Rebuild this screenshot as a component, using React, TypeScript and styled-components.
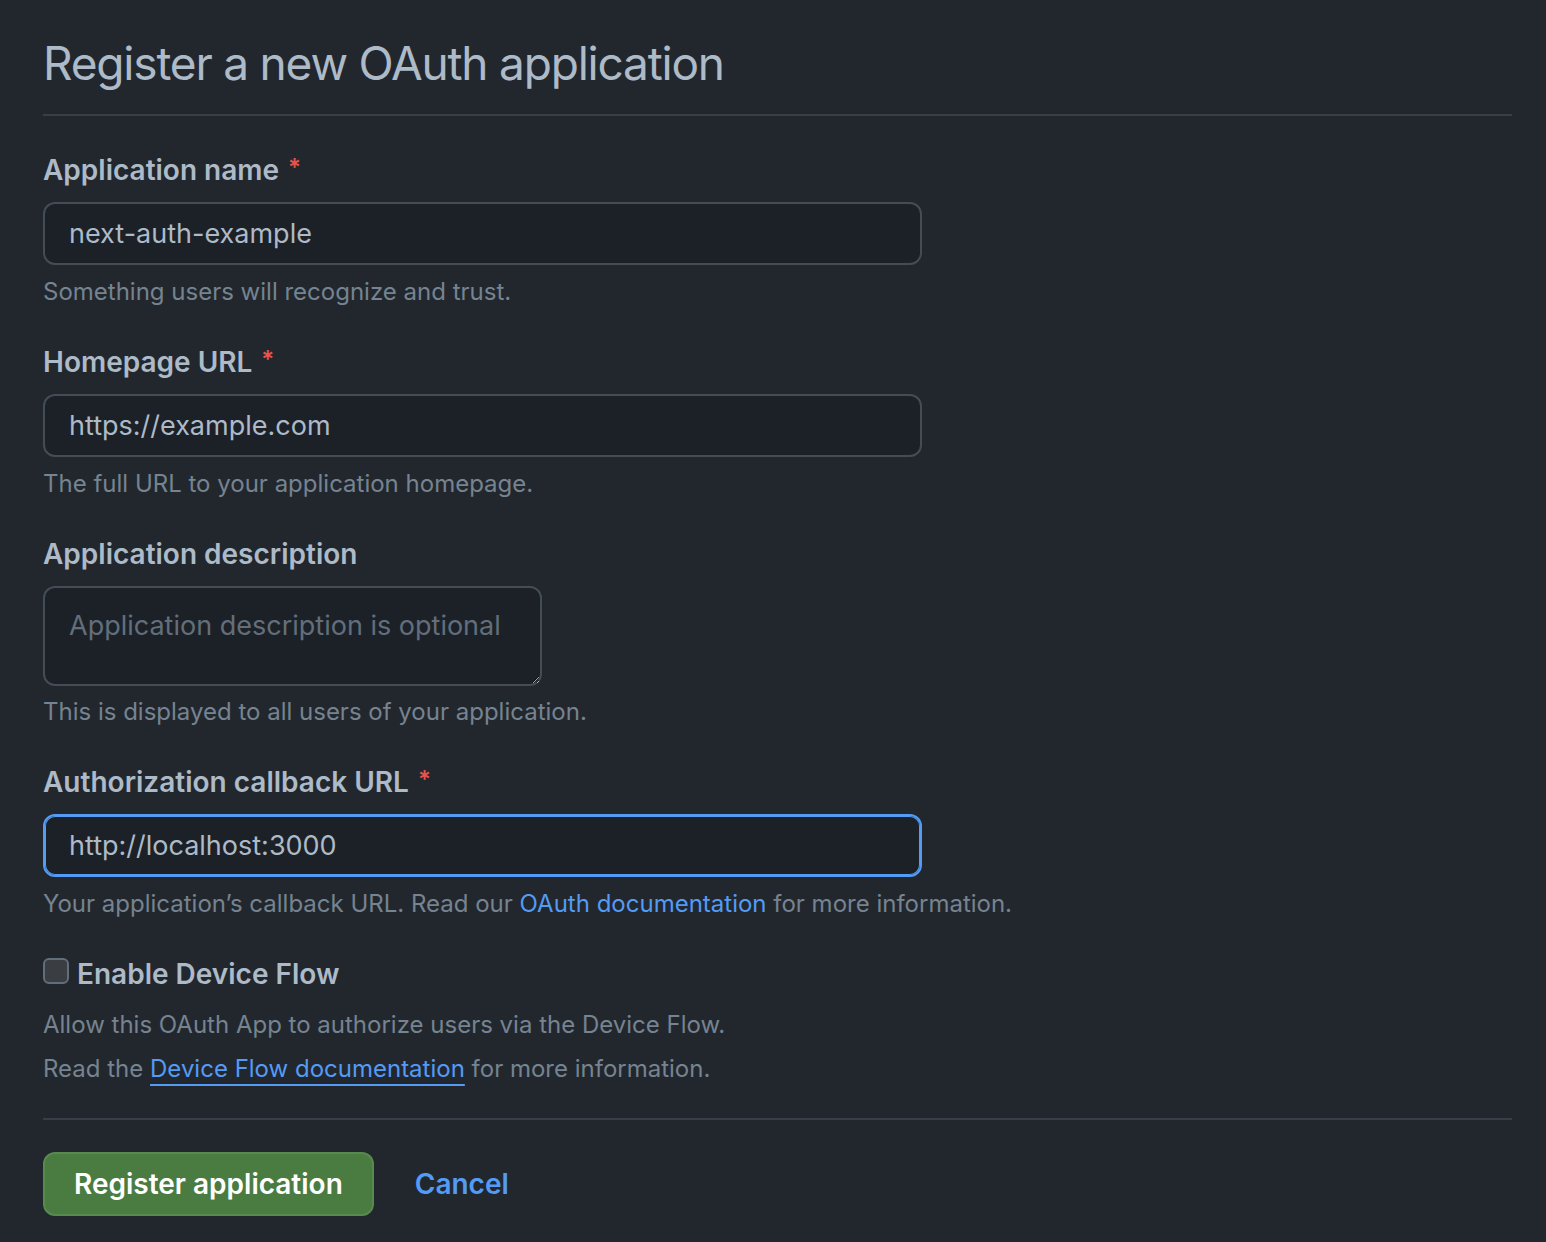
import React, { ReactElement } from 'react';
import styled, { createGlobalStyle } from 'styled-components';

const GlobalStyle = createGlobalStyle`
  html, body {
    margin: 0;
    padding: 0;
    background: #22272e;
  }
  body {
    font-family: Inter, "Noto Sans", "Liberation Sans", sans-serif;
    color: #adbac7;
  }
`;

const Page = styled.main`
  padding: 27px 34px 0 43px;
  min-height: 1242px;
  box-sizing: border-box;
`;

const Header = styled.div`
  padding-bottom: 15px;
  border-bottom: 2px solid #373e47;
`;

const Title = styled.h1`
  margin: 0;
  font-size: 46px;
  font-weight: 400;
  line-height: 72px;
  letter-spacing: -1.2px;
  color: #adbac7;
`;

const Form = styled.form`
  padding-top: 34px;
`;

const Group = styled.div`
  margin-bottom: 32px;
`;

const Label = styled.label`
  display: block;
  font-size: 28px;
  font-weight: 600;
  line-height: 40px;
  margin-bottom: 12px;
  color: #adbac7;
`;

const Required = styled.span`
  color: #e5534b;
  margin-left: 9px;
  font-size: 24px;
  line-height: 0;
  position: relative;
  top: -4px;
`;

const TextInput = styled.input<{ $focused?: boolean }>`
  display: block;
  box-sizing: border-box;
  width: 879px;
  height: 63px;
  padding: 0 24px;
  font-family: inherit;
  font-size: 27px;
  color: #adbac7;
  background: #1c2128;
  border: 2px solid ${(p) => (p.$focused ? '#539bf5' : '#444c56')};
  border-radius: 12px;
  outline: none;
  box-shadow: ${(p) => (p.$focused ? 'inset 0 0 0 1px #539bf5' : 'none')};
`;

const TextArea = styled.textarea`
  display: block;
  box-sizing: border-box;
  width: 499px;
  height: 100px;
  padding: 18px 24px 10px;
  font-family: inherit;
  font-size: 27px;
  line-height: 40px;
  color: #adbac7;
  background: #1c2128;
  border: 2px solid #444c56;
  border-radius: 12px;
  outline: none;
  resize: vertical;
  &::placeholder {
    color: #636e7b;
  }
`;

const Note = styled.p<{ $gap?: number }>`
  margin: ${(p) => p.$gap ?? 9}px 0 0;
  font-size: 24px;
  line-height: 36px;
  color: #768390;
`;

const Link = styled.a<{ $underline?: boolean }>`
  color: #539bf5;
  text-decoration: ${(p) => (p.$underline ? 'underline' : 'none')};
  text-underline-offset: 7px;
  text-decoration-thickness: 2px;
`;

const CheckRow = styled.label`
  display: flex;
  align-items: center;
  gap: 8px;
  font-size: 28px;
  font-weight: 600;
  line-height: 40px;
  color: #adbac7;
`;

const CheckBox = styled.span`
  display: inline-block;
  box-sizing: border-box;
  width: 26px;
  height: 26px;
  border: 2px solid #636e7b;
  border-radius: 6px;
  background: #3a3d42;
  margin-top: -6px;
`;

const Footer = styled.div`
  margin-top: 31px;
  padding-top: 32px;
  border-top: 2px solid #373e47;
  display: flex;
  align-items: center;
  gap: 41px;
`;

const PrimaryButton = styled.button`
  box-sizing: border-box;
  height: 64px;
  padding: 0 29px;
  font-family: inherit;
  font-size: 28px;
  font-weight: 600;
  color: #ffffff;
  background: #4a7c42;
  border: 2px solid #578a4d;
  border-radius: 12px;
`;

const CancelLink = styled.a`
  font-size: 28px;
  font-weight: 600;
  color: #539bf5;
  text-decoration: none;
`;

interface Field {
  label: string;
  value: string;
  hint: React.ReactNode;
  required: boolean;
  focused?: boolean;
}

const fields: Field[] = [
  {
    label: 'Application name',
    value: 'next-auth-example',
    hint: 'Something users will recognize and trust.',
    required: true,
  },
  {
    label: 'Homepage URL',
    value: 'https://example.com',
    hint: 'The full URL to your application homepage.',
    required: true,
  },
];

const App = (): ReactElement => (
  <>
    <GlobalStyle />
    <Page>
      <Header>
        <Title>Register a new OAuth application</Title>
      </Header>
      <Form onSubmit={(e) => e.preventDefault()}>
        {fields.map((f) => (
          <Group key={f.label}>
            <Label>
              {f.label}
              {f.required && <Required>*</Required>}
            </Label>
            <TextInput defaultValue={f.value} />
            <Note>{f.hint}</Note>
          </Group>
        ))}
        <Group>
          <Label>Application description</Label>
          <TextArea placeholder="Application description is optional" />
          <Note $gap={8}>This is displayed to all users of your application.</Note>
        </Group>
        <Group>
          <Label>
            Authorization callback URL
            <Required>*</Required>
          </Label>
          <TextInput $focused defaultValue="http://localhost:3000" />
          <Note>
            Your application’s callback URL. Read our{' '}
            <Link href="#">OAuth documentation</Link> for more information.
          </Note>
        </Group>
        <div>
          <CheckRow>
            <CheckBox />
            Enable Device Flow
          </CheckRow>
          <Note $gap={13}>Allow this OAuth App to authorize users via the Device Flow.</Note>
          <Note $gap={8}>
            Read the <Link href="#" $underline>Device Flow documentation</Link> for more
            information.
          </Note>
        </div>
        <Footer>
          <PrimaryButton type="submit">Register application</PrimaryButton>
          <CancelLink href="#">Cancel</CancelLink>
        </Footer>
      </Form>
    </Page>
  </>
);

export default App;
